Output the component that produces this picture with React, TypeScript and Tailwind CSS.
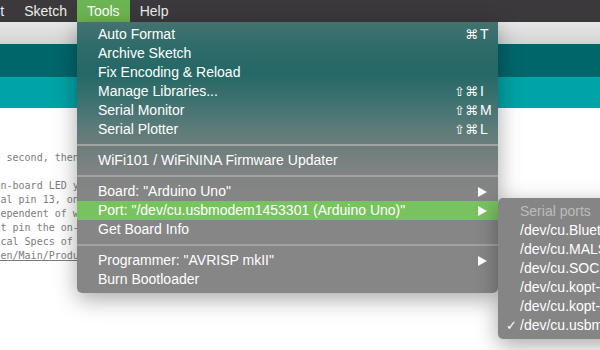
import React from 'react';

// one entry in the Tools menu
interface RowProps {
  label: string;
  mods?: string;
  keyChar?: string;
  arrow?: boolean;
  active?: boolean;
}

const Row: React.FC<RowProps> = ({ label, mods, keyChar, arrow, active }) => (
  <div className={active ? 'flex h-[19px] items-center pl-[21px] bg-[#79c260]' : 'flex h-[19px] items-center pl-[21px]'}>
    <span className="flex-1 whitespace-nowrap">{label}</span>
    {keyChar && (
      <span className="mr-[6px] flex items-center font-['DejaVu_Sans',sans-serif] text-[13px]">
        <span>{mods}</span>
        <span className="ml-[2px] w-[12px] font-['Liberation_Sans',sans-serif] text-[14px]">{keyChar}</span>
      </span>
    )}
    {arrow && (
      <svg className="mr-[11px]" width="9" height="10" viewBox="0 0 9 10">
        <path d="M0 0L9 5L0 10Z" fill="#ffffff" />
      </svg>
    )}
  </div>
);

const Separator = () => <div className="my-[5px] h-[2px] bg-[#a2a2a2]" />;

const codeLines = [
  '/*',
  '  Blink',
  '',
  '  Turns an LED on for one second, then off for one second, repeatedly.',
  '',
  '  Most Arduinos have an on-board LED you can control. On the UNO, MEGA and ZERO',
  '  it is attached to digital pin 13, on MKR1000 on pin 6. LED_BUILTIN is set to',
  '  the correct LED pin independent of which board is used.',
  '  If you want to know what pin the on-board LED is connected to on your Arduino',
  '  model, check the Technical Specs of your board at:',
];

const ports = [
  '/dev/cu.Bluetooth-Incoming-Port',
  '/dev/cu.MALS',
  '/dev/cu.SOC',
  '/dev/cu.kopt-BT-Port',
  '/dev/cu.kopt-SerialPort',
];

export default function App() {
  return (
    <div className="relative h-[350px] w-[600px] overflow-hidden bg-white font-['Liberation_Sans','DejaVu_Sans',sans-serif] text-[14px] text-white">
      {/* menu bar */}
      <div className="flex h-[22px] items-center bg-[#3b393c] text-[#ededed]">
        <span className="-ml-[30px] flex h-full items-center px-[10px]">Edit</span>
        <span className="flex h-full items-center px-[10px]">Sketch</span>
        <span className="flex h-full items-center bg-[#6db553] px-[10px] text-white">Tools</span>
        <span className="flex h-full items-center px-[10px]">Help</span>
      </div>

      {/* IDE behind the menu */}
      <div className="h-[22px] bg-gradient-to-b from-[#e8e8e8] to-[#d3d3d3]" />
      <div className="h-[33px] bg-[#00666a]" />
      <div className="h-[31px] bg-[#00a3a7]" />
      <div className="overflow-hidden pt-[1px] font-['DejaVu_Sans_Mono',monospace] text-[10px] leading-[14px] text-[#7c7c7c]">
        {codeLines.map((line, i) => (
          <div key={i} className="-ml-[150px] h-[14px] whitespace-pre">{line}</div>
        ))}
        <div className="-ml-[150px] h-[14px] whitespace-pre">
          {'  '}<span className="underline">https://www.arduino.cc/en/Main/Products</span>
        </div>
      </div>

      {/* Tools menu */}
      <div className="absolute left-[77px] top-[22px] w-[421px] rounded-b-[5px] bg-[linear-gradient(to_bottom,#44726f_0%,#2d6b69_10%,#256866_19%,#3d716f_29%,#587a78_38%,#707e7d_47%,#808383_56%,#868686_66%,#868686_100%)] pb-[4px] pt-[3px] shadow-[0_6px_22px_rgba(0,0,0,0.35)]">
        <Row label="Auto Format" mods="⌘" keyChar="T" />
        <Row label="Archive Sketch" />
        <Row label="Fix Encoding & Reload" />
        <Row label="Manage Libraries..." mods="⇧⌘" keyChar="I" />
        <Row label="Serial Monitor" mods="⇧⌘" keyChar="M" />
        <Row label="Serial Plotter" mods="⇧⌘" keyChar="L" />
        <Separator />
        <Row label="WiFi101 / WiFiNINA Firmware Updater" />
        <Separator />
        <Row label={'Board: "Arduino Uno"'} arrow />
        <Row label={'Port: "/dev/cu.usbmodem1453301 (Arduino Uno)"'} arrow active />
        <Row label="Get Board Info" />
        <Separator />
        <Row label={'Programmer: "AVRISP mkII"'} arrow />
        <Row label="Burn Bootloader" />
      </div>

      {/* Port submenu */}
      <div className="absolute left-[498px] top-[198px] w-[230px] rounded-[5px] bg-[#858585] pb-[4px] pt-[4px] shadow-[0_6px_22px_rgba(0,0,0,0.35)]">
        <div className="flex h-[19px] items-center pl-[22px] text-[#bcbcbc]">Serial ports</div>
        {ports.map((p) => (
          <div key={p} className="flex h-[19px] items-center pl-[22px] whitespace-nowrap">{p}</div>
        ))}
        <div className="flex h-[19px] items-center pl-[8px] whitespace-nowrap">
          <span className="w-[14px] font-['DejaVu_Sans',sans-serif] text-[13px]">✓</span>
          <span>/dev/cu.usbmodem1453301</span>
        </div>
      </div>
    </div>
  );
}
